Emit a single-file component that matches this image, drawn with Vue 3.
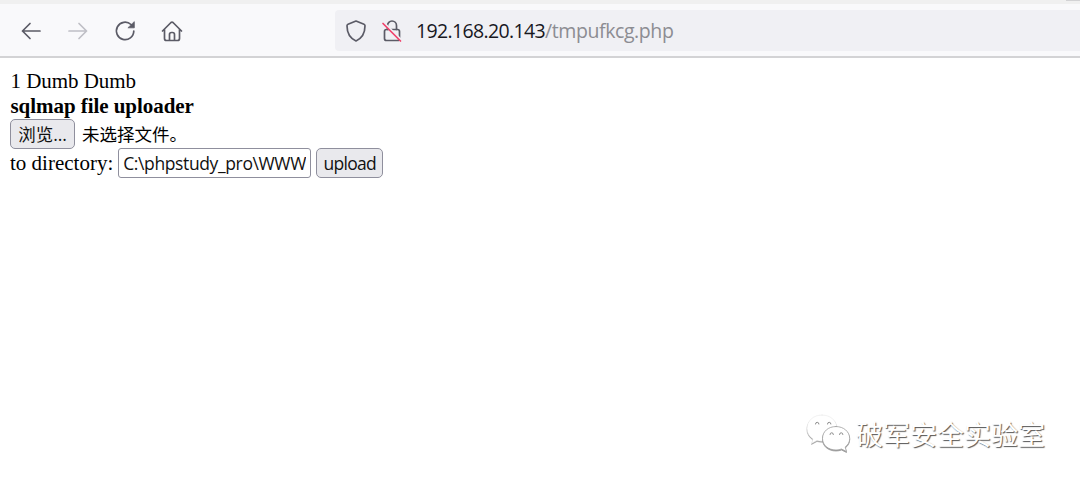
<template>
  <div class="browser">
    <div class="tab-strip"><span class="tab-edge"></span></div>

    <header class="toolbar">
      <nav class="nav-buttons">
        <button
          v-for="item in navItems"
          :key="item.name"
          :class="['nav-button', item.name]"
          :aria-label="item.name"
          type="button"
        >
          <svg viewBox="0 0 24 24" width="24" height="24">
            <path :d="item.path" />
            <path v-if="item.fill" class="solid" :d="item.fill" />
          </svg>
        </button>
      </nav>

      <div class="url-bar">
        <svg class="shield" viewBox="0 0 22 24" width="22" height="24">
          <path d="M11 2 L19 5.2 Q20 5.6 20 6.8 C20 14 16.5 19.5 11 22 C5.5 19.5 2 14 2 6.8 Q2 5.6 3 5.2 Z" />
        </svg>
        <svg class="lock" viewBox="0 0 22 24" width="22" height="24">
          <path d="M6.500 10.500V6.500a4.500 4.500 0 0 1 9 0V10.500" />
          <rect x="3.500" y="10.500" width="15" height="11" rx="2" />
          <path class="halo" d="M3 4.200L20.500 21.500" />
          <path class="slash" d="M2 4.500L19.500 22" />
        </svg>
        <div class="address"><span class="host">{{ host }}</span><span class="path">{{ path }}</span></div>
      </div>
    </header>

    <main class="page">
      <div class="line intro">1 Dumb Dumb</div>
      <div class="line title">sqlmap file uploader</div>
      <form @submit.prevent>
        <div class="file-row">
          <button class="control browse" type="button">浏览...</button>
          <span class="file-name">未选择文件。</span>
        </div>
        <div class="dir-row">
          <label for="directory">to directory:</label>
          <input id="directory" v-model="directory" class="dir-input" type="text" spellcheck="false" />
          <button class="control upload" type="submit">upload</button>
        </div>
      </form>
    </main>

    <div class="watermark">
      <svg viewBox="0 0 46 40" width="46" height="40">
        <path class="bubble" d="M17 1C8 1 2 7 2 14.500c0 4.500 2.300 8 6 10.500L6.500 29.500l5.500-3c7 2.200 20-1 20-12C32 7 26 1 17 1Z" />
        <path class="bubble front" d="M31 12.500c-8 0-13.500 5.200-13.500 12C17.500 31 23 36 31 36c2 0 4-.4 5.500-1l5 2.500-1.300-4.500c2.800-2 4.500-5 4.500-8.500 0-6.800-6-12-13.700-12Z" />
        <path class="eyes" d="M10.500 10a1.700 1.700 0 1 1 3.400 0M22.500 10a1.700 1.700 0 1 1 3.400 0M25 20.500a1.700 1.700 0 1 1 3.400 0M34.500 20.500a1.700 1.700 0 1 1 3.400 0" />
      </svg>
      <span>破军安全实验室</span>
    </div>
  </div>
</template>

<script setup>
import { ref } from 'vue';

const host = '192.168.20.143';
const path = '/tmpufkcg.php';
const directory = ref('C:\\phpstudy_pro\\WWW');

const navItems = [
  { name: 'back', path: 'M21 12H3.500M11 4.500L3.500 12L11 19.500' },
  { name: 'forward', path: 'M3 12H20.500M13 4.500L20.500 12L13 19.500' },
  {
    name: 'reload',
    path: 'M20.800 12a8.700 8.700 0 1 1-2.800-6.500L19 6.500',
    fill: 'M21.300 3v5.800h-6Z'
  },
  {
    name: 'home',
    path: 'M2.500 12L11 3.500Q12 2.700 13 3.500L21.500 12M4.500 10.500V19.500Q4.500 21.500 6.500 21.500H17.500Q19.500 21.500 19.500 19.500V10.500M9.500 21V15.500Q9.500 13.500 11.500 13.500H12.500Q14.500 13.500 14.500 15.500V21'
  }
];
</script>

<style>
body {
  margin: 0;
  background: #ffffff;
}
</style>

<style scoped>
.browser {
  position: relative;
  height: 483px;
  overflow: hidden;
  background: #ffffff;
}

.tab-strip {
  display: flex;
  justify-content: flex-end;
  height: 4px;
  background: #f0f0f0;
}

.tab-edge {
  width: 14px;
  height: 1px;
  background: #d2d2d4;
}

.toolbar {
  display: flex;
  box-sizing: border-box;
  height: 54px;
  padding-top: 6px;
  background: #f9f9fb;
  border-bottom: 2px solid #d3d3d5;
}

.nav-buttons {
  display: flex;
  align-items: center;
  gap: 23px;
  width: 316px;
  height: 42px;
  padding-left: 19px;
}

.nav-button {
  display: flex;
  width: 24px;
  height: 24px;
  padding: 0;
  border: none;
  background: none;
}

svg {
  flex: none;
  fill: none;
  stroke: #5b5b66;
  stroke-width: 1.7;
  stroke-linecap: round;
  stroke-linejoin: round;
}

.forward svg {
  stroke: #bfbfc6;
}

.solid {
  fill: #5b5b66;
  stroke-width: 0.8;
}

.url-bar {
  display: flex;
  flex: 1;
  align-items: center;
  height: 41px;
  padding-left: 10px;
  border-radius: 4px 0 0 4px;
  background: #f0f0f4;
}

.lock {
  margin-left: 14px;
}

.halo {
  stroke: #f0f0f4;
  stroke-width: 2.5;
}

.slash {
  stroke: #f0426b;
}

.address {
  margin-left: 13px;
  font-family: "Open Sans", "Noto Sans", sans-serif;
  font-size: 19.500px;
  line-height: 41px;
  white-space: nowrap;
}

.host {
  color: #18181f;
  letter-spacing: -0.65px;
}

.path {
  color: #8c8c92;
  letter-spacing: -0.4px;
}

.page {
  padding: 11px 10px 0;
  color: #000000;
  font-family: "Liberation Serif", serif;
  font-size: 21px;
}

.line {
  height: 25px;
  padding-left: 0.500px;
  line-height: 25px;
  letter-spacing: -0.05px;
}

.title {
  font-weight: bold;
}

.file-row,
.dir-row {
  display: flex;
  align-items: center;
  height: 30px;
  white-space: nowrap;
}

.file-row {
  height: 29px;
}

.control,
.dir-input {
  box-sizing: border-box;
  height: 30px;
  margin: 0;
  color: #111111;
  font-family: "Open Sans", "Noto Sans CJK SC", sans-serif;
  font-size: 17.500px;
}

.control {
  padding: 0;
  border: 1px solid #8f8f9d;
  border-radius: 5px;
  background: #e9e9ed;
  line-height: 26px;
}

.browse {
  width: 65px;
  letter-spacing: -0.1px;
}

.file-name {
  margin-left: 7px;
  font-family: "Noto Sans CJK SC", sans-serif;
  font-size: 17.500px;
  line-height: 28px;
}

.dir-input {
  width: 193px;
  margin-left: 5px;
  padding: 0 4px;
  border: 1px solid #8f8f9d;
  border-radius: 3px;
  outline: none;
  background: #ffffff;
  letter-spacing: -0.38px;
}

.upload {
  width: 67px;
  margin-left: 5px;
  letter-spacing: -0.75px;
}

/* 右下角水印，浮在页面内容之上 */
.watermark {
  position: absolute;
  left: 805px;
  top: 412px;
  display: flex;
  align-items: center;
  color: #ffffff;
  font-family: "Noto Sans CJK SC", sans-serif;
  font-size: 27px;
  line-height: 44px;
  white-space: nowrap;
  text-shadow: 1px 1px 1px #555555;
}

.watermark span {
  margin-left: 5px;
}

.bubble {
  fill: #ffffff;
  stroke: #e4e4e4;
  stroke-width: 0.5;
  filter: drop-shadow(0.3px 1px 0.5px #999999);
}

.bubble.front {
  stroke: #a0a0a0;
  stroke-width: 0.8;
}

.eyes {
  stroke: #8c8c8c;
  stroke-width: 1;
}
</style>
